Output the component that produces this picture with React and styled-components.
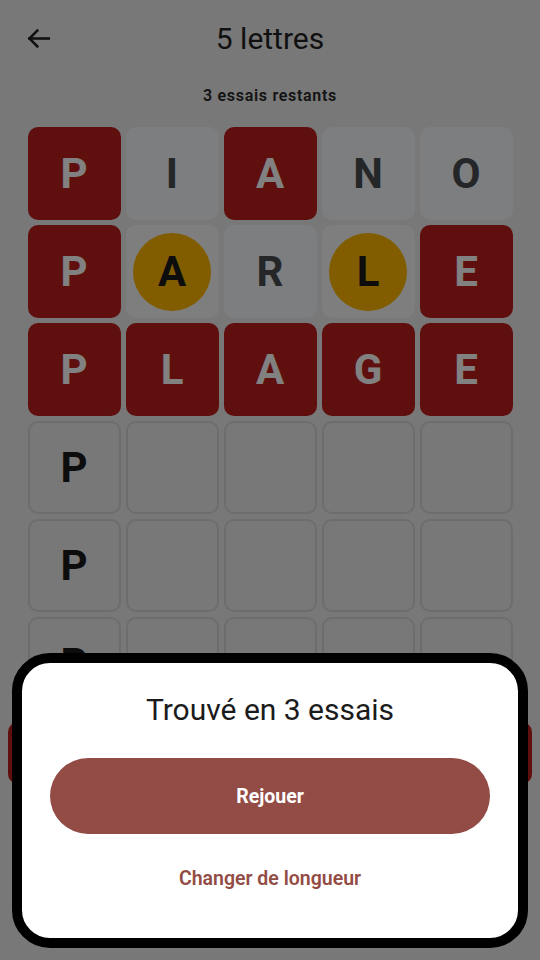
import React from "react";
import styled, { createGlobalStyle } from "styled-components";

const GlobalStyle = createGlobalStyle`
  html, body {
    margin: 0;
    padding: 0;
    background: #e2e2e2;
    font-family: Roboto, "Liberation Sans", sans-serif;
  }
  * {
    box-sizing: border-box;
  }
`;

const Page = styled.div`
  width: 540px;
  min-height: 960px;
  background: #e2e2e2;
  display: flex;
  flex-direction: column;
`;

const Header = styled.header`
  height: 76px;
  display: grid;
  grid-template-columns: 72px 1fr 72px;
  align-items: center;
`;

const BackButton = styled.button`
  border: none;
  background: none;
  padding: 0 0 0 24px;
  height: 40px;
  display: flex;
  align-items: center;
  color: #1f1f1f;
`;

const Title = styled.h1`
  margin: 0;
  text-align: center;
  font-size: 30px;
  font-weight: 400;
  color: #1f1f1f;
`;

const Subtitle = styled.div`
  margin-top: 10px;
  line-height: 20px;
  text-align: center;
  font-size: 16px;
  font-weight: 600;
  letter-spacing: 0.7px;
  color: #262626;
`;

const Board = styled.div`
  margin-top: 21px;
  display: grid;
  grid-template-columns: repeat(5, 93px);
  grid-auto-rows: 93px;
  gap: 5px;
  justify-content: center;
`;

const tileStyles = {
  correct: { bg: "#b41e1a", border: "#b41e1a", color: "#f4f4f4" },
  absent: { bg: "#eaeef2", border: "#eaeef2", color: "#45484d" },
  present: { bg: "#efefef", border: "#efefef", color: "#1a1a1a" },
  empty: { bg: "transparent", border: "#cfcfcf", color: "#1a1a1a" },
};

const Tile = styled.div`
  border-radius: 10px;
  background: ${(p) => tileStyles[p.$state].bg};
  border: 2px solid ${(p) => tileStyles[p.$state].border};
  color: ${(p) => tileStyles[p.$state].color};
  display: flex;
  align-items: center;
  justify-content: center;
  font-size: 42px;
  font-weight: 700;
`;

const Circle = styled.div`
  width: 78px;
  height: 78px;
  border-radius: 50%;
  background: #f3b000;
  display: flex;
  align-items: center;
  justify-content: center;
`;

const SubmitBar = styled.div`
  margin: 12px 8px 0;
  height: 62px;
  border-radius: 10px;
  background: #b41e1a;
`;

const Scrim = styled.div`
  position: fixed;
  inset: 0;
  background: rgba(0, 0, 0, 0.47);
`;

const Sheet = styled.div`
  position: fixed;
  left: 12px;
  right: 12px;
  bottom: 12px;
  background: #ffffff;
  border: 10px solid #000000;
  border-radius: 38px;
  padding: 29px 28px 47px;
  display: flex;
  flex-direction: column;
  align-items: stretch;
`;

const SheetTitle = styled.h2`
  margin: 0;
  line-height: 36px;
  text-align: center;
  font-size: 30px;
  font-weight: 400;
  color: #1b1b1b;
`;

const PrimaryButton = styled.button`
  margin-top: 30px;
  height: 76px;
  border: none;
  border-radius: 38px;
  background: #934c45;
  color: #ffffff;
  font-family: inherit;
  font-size: 19.5px;
  font-weight: 700;
`;

const LinkButton = styled.button`
  margin-top: 33px;
  line-height: 24px;
  border: none;
  background: none;
  padding: 0;
  color: #934c45;
  font-family: inherit;
  font-size: 19.5px;
  font-weight: 600;
`;

const rows = [
  [["P", "correct"], ["I", "absent"], ["A", "correct"], ["N", "absent"], ["O", "absent"]],
  [["P", "correct"], ["A", "present"], ["R", "absent"], ["L", "present"], ["E", "correct"]],
  [["P", "correct"], ["L", "correct"], ["A", "correct"], ["G", "correct"], ["E", "correct"]],
  [["P", "empty"], ["", "empty"], ["", "empty"], ["", "empty"], ["", "empty"]],
  [["P", "empty"], ["", "empty"], ["", "empty"], ["", "empty"], ["", "empty"]],
  [["P", "empty"], ["", "empty"], ["", "empty"], ["", "empty"], ["", "empty"]],
];

function ArrowLeft() {
  return (
    <svg width="29" height="29" viewBox="0 0 24 24" fill="none" stroke="currentColor" strokeWidth="2.1" strokeLinecap="square">
      <path d="M20.5 12H4.5" />
      <path d="M11 5.5L4.5 12l6.5 6.5" />
    </svg>
  );
}

export default function App() {
  return (
    <>
      <GlobalStyle />
      <Page>
        <Header>
          <BackButton aria-label="Retour">
            <ArrowLeft />
          </BackButton>
          <Title>5 lettres</Title>
          <span />
        </Header>
        <Subtitle>3 essais restants</Subtitle>
        <Board>
          {rows.flat().map(([letter, state], i) => (
            <Tile key={i} $state={state}>
              {state === "present" ? <Circle>{letter}</Circle> : letter}
            </Tile>
          ))}
        </Board>
        <SubmitBar />
      </Page>
      <Scrim />
      <Sheet>
        <SheetTitle>Trouvé en 3 essais</SheetTitle>
        <PrimaryButton>Rejouer</PrimaryButton>
        <LinkButton>Changer de longueur</LinkButton>
      </Sheet>
    </>
  );
}
